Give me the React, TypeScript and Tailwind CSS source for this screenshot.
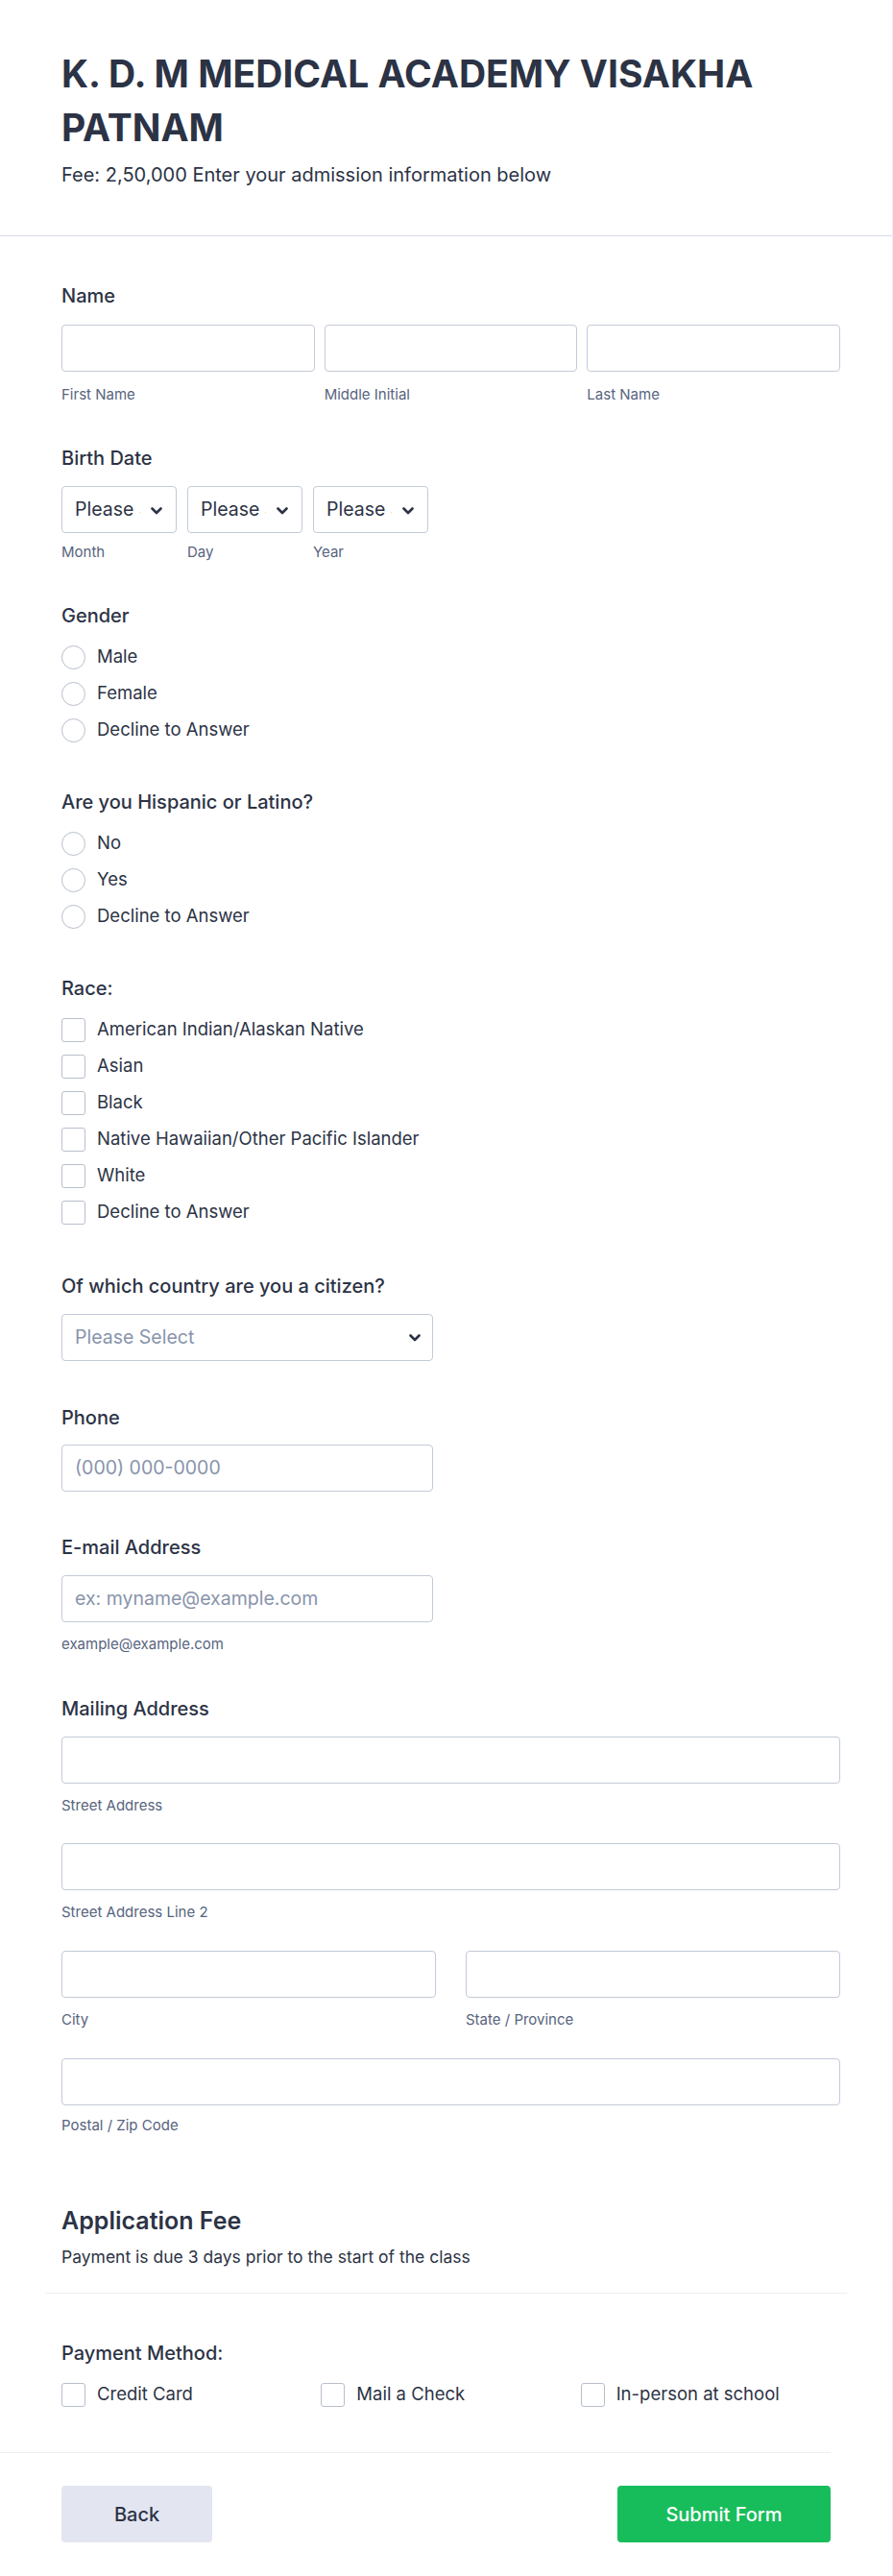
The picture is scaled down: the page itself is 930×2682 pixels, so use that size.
import React from "react";

const Chevron = ({ className = "" }: { className?: string }) => (
  <svg className={className} width="12" height="8" viewBox="0 0 12 8" fill="none">
    <path d="M1.5 1.5L6 6L10.5 1.5" stroke="#2c3345" strokeWidth="2.6" strokeLinecap="round" strokeLinejoin="round" />
  </svg>
);

const Label = ({ children, className = "" }: { children: React.ReactNode; className?: string }) => (
  <div className={"text-[20px] leading-[24px] font-medium text-[#2c3345] " + className}>{children}</div>
);

const Sub = ({ children, className = "" }: { children: React.ReactNode; className?: string }) => (
  <div className={"text-[15px] leading-[20px] text-[#57647e] " + className}>{children}</div>
);

const Input = ({ className = "", placeholder }: { className?: string; placeholder?: string }) => (
  <div className={"h-[49px] rounded-[4px] border border-[#c3cad8] bg-white flex items-center px-[13px] " + className}>
    {placeholder ? <span className="text-[19.5px] text-[#8894ab]">{placeholder}</span> : null}
  </div>
);

const Radio = ({ label }: { label: string }) => (
  <div className="h-[38px] flex items-center">
    <div className="w-[25px] h-[25px] rounded-full border border-[#b8bfcc] bg-white shrink-0" />
    <span className="ml-[12px] text-[18.5px] text-[#2c3345]">{label}</span>
  </div>
);

const Check = ({ label }: { label: string }) => (
  <div className="h-[38px] flex items-center">
    <div className="w-[25px] h-[25px] rounded-[3px] border border-[#b8bfcc] bg-white shrink-0" />
    <span className="ml-[12px] text-[18.5px] text-[#2c3345]">{label}</span>
  </div>
);

const SmallSelect = () => (
  <div className="w-[120px] h-[49px] rounded-[4px] border border-[#c3cad8] bg-white flex items-center relative">
    <div className="ml-[13px] w-[68px] overflow-hidden whitespace-nowrap text-[19.5px] text-[#2c3345]">Please Select</div>
    <Chevron className="absolute right-[14px] top-[21px]" />
  </div>
);

export default function App() {
  return (
    <div className="w-[930px] bg-white border-r border-[#ececf4] font-['Inter',sans-serif] text-[#2c3345]">
      <div className="pl-16 pr-12 pt-[49px] pb-[51px] border-b border-[#d8dae9]">
        <h1 className="text-[39px] leading-[56px] font-bold text-[#2c3345]">
          K. D. M MEDICAL ACADEMY VISAKHA PATNAM
        </h1>
        <p className="mt-[9px] text-[20px] leading-[24px]">Fee: 2,50,000 Enter your admission information below</p>
      </div>

      <div className="pl-16 w-[875px]">
        {/* Name */}
        <Label className="mt-[50px]">Name</Label>
        <div className="mt-[18px] flex gap-[10px]">
          <div className="flex-1">
            <Input />
            <Sub className="mt-[14px]">First Name</Sub>
          </div>
          <div className="flex-1">
            <Input />
            <Sub className="mt-[14px]">Middle Initial</Sub>
          </div>
          <div className="flex-1">
            <Input />
            <Sub className="mt-[14px]">Last Name</Sub>
          </div>
        </div>

        {/* Birth date */}
        <Label className="mt-[44px]">Birth Date</Label>
        <div className="mt-[17px] flex gap-[11px]">
          <div>
            <SmallSelect />
            <Sub className="mt-[10px]">Month</Sub>
          </div>
          <div>
            <SmallSelect />
            <Sub className="mt-[10px]">Day</Sub>
          </div>
          <div>
            <SmallSelect />
            <Sub className="mt-[10px]">Year</Sub>
          </div>
        </div>

        {/* Gender */}
        <Label className="mt-[44px]">Gender</Label>
        <div className="mt-[12px]">
          <Radio label="Male" />
          <Radio label="Female" />
          <Radio label="Decline to Answer" />
        </div>

        <Label className="mt-[44px]">Are you Hispanic or Latino?</Label>
        <div className="mt-[12px]">
          <Radio label="No" />
          <Radio label="Yes" />
          <Radio label="Decline to Answer" />
        </div>

        <Label className="mt-[44px]">Race:</Label>
        <div className="mt-[12px]">
          <Check label="American Indian/Alaskan Native" />
          <Check label="Asian" />
          <Check label="Black" />
          <Check label="Native Hawaiian/Other Pacific Islander" />
          <Check label="White" />
          <Check label="Decline to Answer" />
        </div>

        <Label className="mt-[46px]">Of which country are you a citizen?</Label>
        <div className="mt-[17px] w-[387px] h-[49px] rounded-[4px] border border-[#c3cad8] bg-white flex items-center justify-between pl-[13px] pr-[12px]">
          <span className="text-[19.5px] text-[#8894ab]">Please Select</span>
          <Chevron />
        </div>

        <Label className="mt-[47px]">Phone</Label>
        <Input className="mt-[16px] w-[387px]" placeholder="(000) 000-0000" />

        <Label className="mt-[46px]">E-mail Address</Label>
        <Input className="mt-[17px] w-[387px]" placeholder="ex: myname@example.com" />
        <Sub className="mt-[13px]">example@example.com</Sub>

        <Label className="mt-[45px]">Mailing Address</Label>
        <Input className="mt-[17px]" />
        <Sub className="mt-[13px]">Street Address</Sub>
        <Input className="mt-[29px]" />
        <Sub className="mt-[13px]">Street Address Line 2</Sub>
        <div className="mt-[30px] grid grid-cols-2 gap-[31px]">
          <div>
            <Input />
            <Sub className="mt-[13px]">City</Sub>
          </div>
          <div>
            <Input />
            <Sub className="mt-[13px]">State / Province</Sub>
          </div>
        </div>
        <Input className="mt-[30px]" />
        <Sub className="mt-[11px]">Postal / Zip Code</Sub>

        <h2 className="mt-[73px] text-[25px] leading-[32px] font-semibold">Application Fee</h2>
        <p className="mt-[10px] text-[17.5px] leading-[24px]">Payment is due 3 days prior to the start of the class</p>
        <div className="mt-[25px] -ml-[17px] w-[835px] h-px bg-[#eceef4]" />

        <Label className="mt-[50px]">Payment Method:</Label>
        <div className="mt-[12px] grid grid-cols-3">
          <Check label="Credit Card" />
          <Check label="Mail a Check" />
          <Check label="In-person at school" />
        </div>
      </div>

      <div className="mt-[41px] border-t border-[#eceef4] pt-[34px] pb-[35px] pl-16 w-[865px] flex justify-between">
        <button className="w-[157px] h-[59px] rounded-[4px] bg-[#e3e5f1] text-[20px] font-medium text-[#2c3345]">Back</button>
        <button className="w-[222px] h-[59px] rounded-[4px] bg-[#18bd5b] text-[20px] font-medium text-white">Submit Form</button>
      </div>
    </div>
  );
}
